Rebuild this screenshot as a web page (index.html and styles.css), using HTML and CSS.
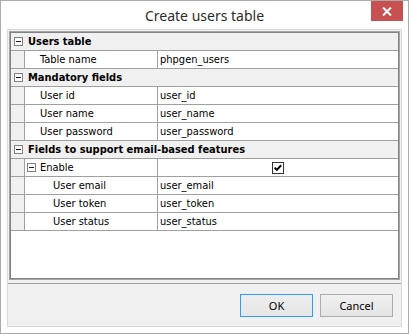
FILE: index.html
```html
<!DOCTYPE html>
<html lang="en">
<head>
    <meta charset="UTF-8">
    <title>Create users table</title>
    <link rel="stylesheet" href="styles.css">
</head>
<body>
    <div class="window">
        <div class="titlebar">
            <div></div>
            <div class="title">Create users table</div>
            <button class="close-btn" aria-label="Close">
                <svg width="10" height="9" viewBox="0 0 10 9">
                    <path d="M1 0.5 L9 8.5 M9 0.5 L1 8.5" stroke="#fff" stroke-width="2" fill="none"/>
                </svg>
            </button>
        </div>
        <div class="client">
            <div class="prop-grid">
                <div class="category">
                    <span class="expander"></span>
                    <span class="cat-name">Users table</span>
                </div>
                <div class="prop">
                    <div class="gutter"></div>
                    <div class="label">Table name</div>
                    <div class="value">phpgen_users</div>
                </div>

                <div class="category">
                    <span class="expander"></span>
                    <span class="cat-name">Mandatory fields</span>
                </div>
                <div class="prop">
                    <div class="gutter"></div>
                    <div class="label">User id</div>
                    <div class="value">user_id</div>
                </div>
                <div class="prop">
                    <div class="gutter"></div>
                    <div class="label">User name</div>
                    <div class="value">user_name</div>
                </div>
                <div class="prop">
                    <div class="gutter"></div>
                    <div class="label">User password</div>
                    <div class="value">user_password</div>
                </div>

                <div class="category">
                    <span class="expander"></span>
                    <span class="cat-name">Fields to support email-based features</span>
                </div>
                <div class="prop">
                    <div class="gutter"></div>
                    <div class="label label-parent"><span class="expander"></span>Enable</div>
                    <div class="value value-check">
                        <svg width="12" height="12" viewBox="0 0 12 12">
                            <rect x="0.5" y="0.5" width="11" height="11" fill="#fff" stroke="#333"/>
                            <path d="M2.6 5.6 L4.8 7.9 L9.2 3.2" stroke="#000" stroke-width="2" fill="none"/>
                        </svg>
                    </div>
                </div>
                <div class="prop">
                    <div class="gutter"></div>
                    <div class="label label-child">User email</div>
                    <div class="value">user_email</div>
                </div>
                <div class="prop">
                    <div class="gutter"></div>
                    <div class="label label-child">User token</div>
                    <div class="value">user_token</div>
                </div>
                <div class="prop">
                    <div class="gutter"></div>
                    <div class="label label-child">User status</div>
                    <div class="value">user_status</div>
                </div>
            </div>
            <div class="footer">
                <button class="btn btn-default">OK</button>
                <button class="btn">Cancel</button>
            </div>
        </div>
    </div>
</body>
</html>
```

FILE: styles.css
```css
body {
    margin: 0;
    font-family: 'DejaVu Sans Condensed', 'DejaVu Sans', sans-serif;
    font-size: 11px;
    color: #000;
}
.window {
    width: 409px;
    height: 334px;
    box-sizing: border-box;
    border: 1px solid #ababab;
    background-color: #fff;
    display: flex;
    flex-direction: column;
}
.titlebar {
    height: 28px;
    display: grid;
    grid-template-columns: 1fr auto 1fr;
    align-items: start;
}
.title {
    font-family: 'Noto Sans', sans-serif;
    font-size: 14px;
    line-height: 19px;
    padding-top: 5px;
    color: #2b2b2b;
}
.close-btn {
    justify-self: end;
    width: 32px;
    height: 20px;
    margin-right: 5px;
    padding: 0;
    border: none;
    background-color: #c75050;
    display: flex;
    align-items: center;
    justify-content: center;
}
.client {
    flex: 1;
    margin: 0 6px 6px;
    border: 1px solid #d9d9d9;
    background-color: #f0f0f0;
    display: flex;
    flex-direction: column;
}
.prop-grid {
    height: 249px;
    box-sizing: border-box;
    margin: 1px 1px 0;
    padding-top: 1px;
    border: 1px solid #a5a5a5;
    box-shadow: inset 0 0 0 1px #828282;
    background-color: #fff;
    padding-left: 1px;
    padding-right: 1px;
}
.category {
    height: 17px;
    border-bottom: 1px solid #a0a0a0;
    background-color: #f0f0f0;
    display: flex;
    align-items: center;
    font-weight: bold;
    line-height: 17px;
}
.category .expander {
    margin-left: 3px;
    margin-right: 5px;
}
.expander {
    width: 9px;
    height: 9px;
    box-sizing: border-box;
    border: 1px solid #808080;
    background: #fff linear-gradient(#1c1c1c, #1c1c1c) no-repeat center / 5px 1px;
    flex-shrink: 0;
}
.prop {
    height: 17px;
    border-bottom: 1px solid #a0a0a0;
    display: flex;
    line-height: 17px;
}
.gutter {
    width: 13px;
    background-color: #f0f0f0;
    border-right: 1px solid #a0a0a0;
}
.label {
    width: 133px;
    padding-left: 15px;
    box-sizing: border-box;
    border-right: 1px solid #a0a0a0;
    white-space: nowrap;
}
.label-parent {
    padding-left: 2px;
    display: flex;
    align-items: center;
}
.label-parent .expander {
    margin-right: 4px;
}
.label-child {
    padding-left: 28px;
}
.value {
    flex: 1;
    padding-left: 2px;
    white-space: nowrap;
}
.value-check {
    padding-left: 0;
    display: flex;
    align-items: center;
    justify-content: center;
}
.footer {
    margin-top: 3px;
    border-top: 1px solid #a0a0a0;
    flex: 1;
    display: flex;
    justify-content: flex-end;
    align-items: flex-start;
    gap: 7px;
    padding: 10px 8px 0 0;
}
.btn {
    width: 73px;
    height: 23px;
    padding: 0;
    border: 1px solid #acacac;
    background: linear-gradient(#f0f0f0, #e5e5e5);
    font-family: 'Noto Sans', sans-serif;
    font-size: 11px;
    color: #000;
}
.btn-default {
    border-color: #3399ff;
    background: linear-gradient(#ecf4fc, #e5e5e5);
    background: linear-gradient(#eeeeee, #e6e6e6);
}
```
